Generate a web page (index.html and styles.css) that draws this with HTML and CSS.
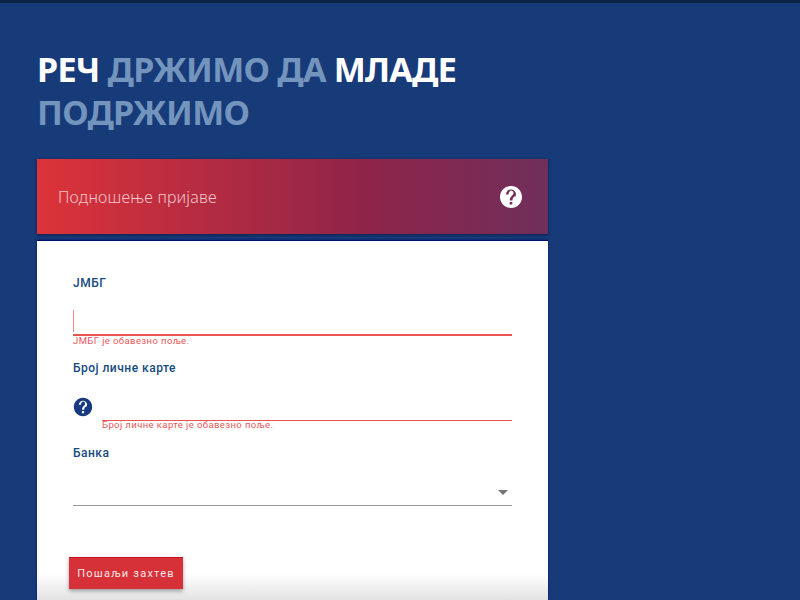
FILE: index.html
```html
<!DOCTYPE html>
<html lang="sr">
<head>
<meta charset="utf-8">
<title>Подношење пријаве</title>
<link rel="stylesheet" href="styles.css">
</head>
<body>
<div class="topbar"></div>
<main class="content">
  <h1 class="title"><span>РЕЧ</span> <span class="dim">ДРЖИМО ДА</span> <span>МЛАДЕ</span> <span class="dim">ПОДРЖИМО</span></h1>
  <section class="panel">
    <header class="panel-head">
      <span class="panel-title">Подношење пријаве</span>
      <svg class="help-white" viewBox="0 0 24 24" width="24" height="24"><path d="M12 1C5.9 1 1 5.9 1 12s4.9 11 11 11 11-4.900 11-11S18.100 1 12 1zm1.300 18.500h-2.600v-2.600h2.600v2.600zm2.700-8.600-1.100 1.200c-.9.900-1.400 1.600-1.400 3.300h-2.700v-.6c0-1.300.5-2.500 1.400-3.400l1.600-1.600c.5-.5.700-1.100.7-1.800 0-1.400-1.100-2.500-2.500-2.500S9.500 8 9.500 9.400H7c0-2.800 2.200-5 5-5s5 2.200 5 5c0 1-.4 2-1 2.500z"/></svg>
    </header>
    <form class="card">
      <div class="field">
        <label class="label">ЈМБГ</label>
        <div class="input error thick"><span class="caret"></span></div>
        <div class="msg">ЈМБГ је обавезно поље.</div>
      </div>
      <div class="field">
        <label class="label">Број личне карте</label>
        <div class="row">
          <svg class="help-blue" viewBox="0 0 24 24" width="20" height="20"><path d="M12 1C5.900 1 1 5.900 1 12s4.900 11 11 11 11-4.900 11-11S18.100 1 12 1zm1.300 18.500h-2.600v-2.600h2.600v2.600zm2.700-8.600-1.100 1.200c-.9.900-1.400 1.600-1.400 3.300h-2.700v-.6c0-1.300.5-2.500 1.400-3.400l1.600-1.600c.5-.5.700-1.100.7-1.800 0-1.400-1.100-2.500-2.500-2.500S9.500 8 9.500 9.400H7c0-2.800 2.200-5 5-5s5 2.200 5 5c0 1-.4 2-1 2.500z"/></svg>
          <div class="grow">
            <div class="input error short"></div>
            <div class="msg">Број личне карте је обавезно поље.</div>
          </div>
        </div>
      </div>
      <div class="field">
        <label class="label">Банка</label>
        <div class="input select"><span class="arrow"></span></div>
      </div>
      <button class="submit" type="button">Пошаљи захтев</button>
    </form>
  </section>
</main>
</body>
</html>
```
FILE: styles.css
```css
* { box-sizing: border-box; }
html, body { height: 100%; }
body {
  margin: 0;
  height: 600px;
  overflow: hidden;
  background: #173a78;
  font-family: Roboto, "Liberation Sans", sans-serif;
}
.topbar {
  height: 3px;
  background: #0a2444;
}
.content {
  width: 511px;
  margin-left: 37px;
  padding-top: 45px;
}
.title {
  margin: 0 0 25px;
  font-family: "Noto Sans", sans-serif;
  font-weight: 700;
  font-size: 34px;
  line-height: 43px;
  letter-spacing: -.75px;
  color: #fff;
}
.dim { color: #7394bd; }
.panel-head {
  height: 75px;
  padding: 0 25px 0 21px;
  display: flex;
  align-items: center;
  justify-content: space-between;
  background: linear-gradient(90deg, #dc3339, #8e2449 65%, #6f2f5b);
  box-shadow: 0 1px 3px rgba(0,0,30,.5);
}
.panel-title {
  font-family: "Noto Sans", sans-serif;
  font-weight: 300;
  font-size: 16px;
  letter-spacing: .18px;
  color: #f0c4cc;
}
.help-white { fill: #fff; }
.help-blue { fill: #173a82; flex: none; }
.card {
  margin-top: 6px;
  height: 360px;
  padding: 35px 36px 0;
  background: linear-gradient(#fff 0, #fff 333px, #e2e2e2 100%);
  border-top: 1px solid #00106e;
  box-shadow: 0 0 2px #00106e;
}
.label {
  display: block;
  font-size: 12px;
  font-weight: 500;
  line-height: 14px;
  letter-spacing: .5px;
  color: #174a80;
}
.input { position: relative; }
.error { border-bottom: 1px solid #ea5455; }
.thick { height: 32px; margin-top: 14px; border-bottom-width: 2px; }
.caret {
  display: block;
  position: absolute;
  top: 6px;
  left: 0;
  width: 1px;
  height: 22px;
  background: #e88;
}
.msg {
  font-size: 9.5px;
  line-height: 12px;
  letter-spacing: .4px;
  color: #e8575a;
}
.thick + .msg { margin-top: -1px; margin-bottom: 14px; }
.short + .msg { margin-top: -2px; }
.row {
  display: flex;
  align-items: flex-start;
  margin-top: 14px;
  margin-bottom: 15px;
}
.help-blue { margin: 8px 9px 0 0; }
.grow { flex: 1; }
.short { height: 32px; }
.select {
  height: 32px;
  margin-top: 14px;
  border-bottom: 1px solid #999;
}
.arrow {
  position: absolute;
  right: 4px;
  top: 16px;
  width: 0;
  height: 0;
  border: 5px solid transparent;
  border-bottom: 0;
  border-top-color: #757575;
}
.submit {
  display: block;
  margin: 51px 0 0 -4px;
  width: 114px;
  height: 32px;
  padding: 0;
  border: 0;
  border-top: 1px solid #c8101a;
  background: #d63138;
  color: #f8e6e6;
  font-family: Roboto, sans-serif;
  font-size: 11px;
  letter-spacing: 1.25px;
  box-shadow: 0 2px 4px rgba(0,0,0,.35);
}
```
